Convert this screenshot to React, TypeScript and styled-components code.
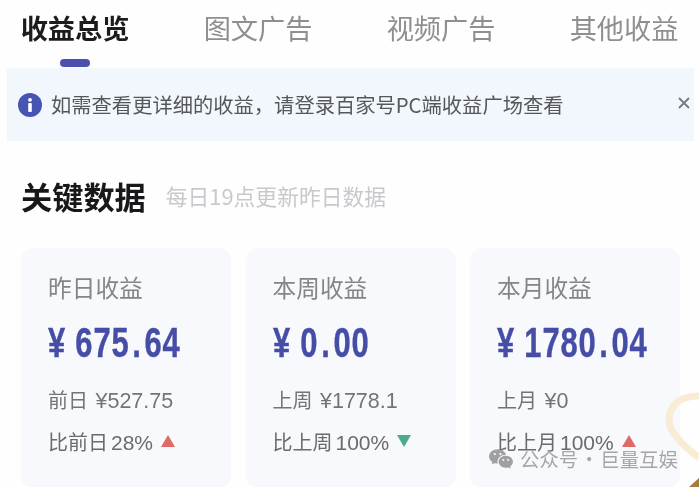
import React from 'react';
import styled, { createGlobalStyle } from 'styled-components';
import { RiWechatFill } from 'react-icons/ri';

const GlobalStyle = createGlobalStyle`
  html, body {
    margin: 0;
    padding: 0;
    background: #fff;
  }
  body {
    font-family: "Noto Sans CJK SC", "Liberation Sans", sans-serif;
  }
`;

const Page = styled.div`
  position: relative;
  width: 699px;
  height: 487px;
  overflow: hidden;
  background: #fefefe;
  filter: blur(0.6px);
`;

const Tabs = styled.div`
  display: flex;
  justify-content: space-between;
  height: 68px;
  padding: 0 21px;
  box-sizing: border-box;
`;

const Tab = styled.div`
  display: flex;
  flex-direction: column;
  align-items: center;
  width: 108px;
`;

const TabLabel = styled.div<{ $active?: boolean }>`
  height: 59px;
  line-height: 55px;
  font-size: 27.2px;
  white-space: nowrap;
  font-weight: ${p => (p.$active ? 600 : 400)};
  color: ${p => (p.$active ? '#1c1c1e' : '#8f8f91')};
`;

const TabMarker = styled.div`
  width: 30px;
  height: 8px;
  border-radius: 4px;
  background: #4a50ac;
`;

const Banner = styled.div`
  display: flex;
  align-items: center;
  height: 73px;
  margin: 0 5px 0 7px;
  padding: 0 4px 0 11px;
  background: #f2f6fd;
`;

const InfoIcon = styled.svg`
  width: 24px;
  height: 24px;
  flex: none;
  margin-right: 9px;
`;

const BannerText = styled.div`
  flex: 1;
  margin-top: -2px;
  font-size: 20.3px;
  white-space: nowrap;
  color: #565759;
`;

const CloseIcon = styled.svg`
  width: 12px;
  height: 12px;
  flex: none;
  margin-top: -4px;
`;

const Heading = styled.div`
  display: flex;
  align-items: center;
  gap: 20px;
  height: 107px;
  padding: 2px 0 0 21px;
  box-sizing: border-box;
`;

const HeadingTitle = styled.h2`
  margin: 0;
  font-size: 31.2px;
  font-weight: 700;
  color: #18181a;
`;

const HeadingNote = styled.span`
  font-size: 21.8px;
  color: #c8c9cc;
`;

const Cards = styled.div`
  display: grid;
  grid-template-columns: repeat(3, minmax(0, 1fr));
  column-gap: 14.5px;
  padding: 0 19px 0 21px;
`;

const Card = styled.div`
  height: 240px;
  padding: 22px 0 0 27px;
  box-sizing: border-box;
  background: #f7f9fc;
  border-radius: 12px;
`;

const CardLabel = styled.div`
  height: 34px;
  line-height: 34px;
  font-size: 23.7px;
  color: #848587;
`;

const Amount = styled.div`
  height: 68px;
  margin-top: 4px;
  line-height: 68px;
  color: #454da6;
  white-space: nowrap;
`;

// no condensed face is installed, so the figures are squeezed from Arial metrics
const AmountText = styled.span`
  display: inline-block;
  font-family: "Liberation Sans", sans-serif;
  font-size: 43px;
  font-weight: 700;
  letter-spacing: 1.1px;
  -webkit-text-stroke: 0.4px #454da6;
  transform: scaleX(0.72);
  transform-origin: left center;
`;

const Yen = styled.span`
  margin-right: 13px;
`;

const Dot = styled.span`
  margin: 0 4px;
`;

const Previous = styled.div`
  height: 30px;
  margin-top: 9px;
  line-height: 30px;
  font-size: 20px;
  color: #737476;
  white-space: nowrap;
`;

const Compare = styled.div`
  display: flex;
  align-items: center;
  gap: 8px;
  height: 30px;
  margin-top: 11px;
  font-size: 20px;
  color: #6a6b6d;
  white-space: nowrap;
`;

const Num = styled.span<{ $size: number }>`
  margin-left: 3px;
  font-family: "Liberation Sans", sans-serif;
  font-size: ${p => p.$size}px;
`;

const Trend = styled.span<{ $up: boolean }>`
  width: 0;
  height: 0;
  border-left: 7px solid transparent;
  border-right: 7px solid transparent;
  border-bottom: ${p => (p.$up ? '12px solid #de6a68' : 'none')};
  border-top: ${p => (p.$up ? 'none' : '12px solid #4daa8c')};
`;

const Watermark = styled.div`
  position: absolute;
  left: 488px;
  top: 445px;
  display: flex;
  align-items: center;
  gap: 6px;
  font-size: 19.4px;
  line-height: 28px;
  word-spacing: -3px;
  color: #a6a6a8;
  white-space: nowrap;

  svg {
    width: 26px;
    height: 26px;
    color: #a0a0a2;
  }
`;

const CornerArt = styled.svg`
  position: absolute;
  right: 0;
  bottom: 0;
  width: 40px;
  height: 100px;
`;

const cards = [
  { label: '昨日收益', whole: '675', cents: '64', prevLabel: '前日', prev: '527.75', cmpLabel: '比前日', cmp: '28%', up: true },
  { label: '本周收益', whole: '0', cents: '00', prevLabel: '上周', prev: '1778.1', cmpLabel: '比上周', cmp: '100%', up: false },
  { label: '本月收益', whole: '1780', cents: '04', prevLabel: '上月', prev: '0', cmpLabel: '比上月', cmp: '100%', up: true }
];

const tabs = ['收益总览', '图文广告', '视频广告', '其他收益'];

const App: React.FC = () => {
  return (
    <Page>
      <GlobalStyle />
      <Tabs>
        {tabs.map((tab, i) => (
          <Tab key={tab}>
            <TabLabel $active={i === 0}>{tab}</TabLabel>
            {i === 0 && <TabMarker />}
          </Tab>
        ))}
      </Tabs>

      <Banner>
        <InfoIcon viewBox="0 0 24 24">
          <circle cx="12" cy="12" r="12" fill="#4654b4" />
          <circle cx="12" cy="6.8" r="1.9" fill="#fff" />
          <rect x="10.2" y="10" width="3.6" height="9" rx="1" fill="#fff" />
        </InfoIcon>
        <BannerText>如需查看更详细的收益，请登录百家号PC端收益广场查看</BannerText>
        <CloseIcon viewBox="0 0 12 12">
          <path d="M1 1l10 10M11 1L1 11" stroke="#77787a" strokeWidth="1.8" fill="none" />
        </CloseIcon>
      </Banner>

      <Heading>
        <HeadingTitle>关键数据</HeadingTitle>
        <HeadingNote>每日19点更新昨日数据</HeadingNote>
      </Heading>

      <Cards>
        {cards.map(card => (
          <Card key={card.label}>
            <CardLabel>{card.label}</CardLabel>
            <Amount>
              <AmountText>
                <Yen>¥</Yen>
                {card.whole}
                <Dot>.</Dot>
                {card.cents}
              </AmountText>
            </Amount>
            <Previous>
              {card.prevLabel} <Num $size={21.5}>¥{card.prev}</Num>
            </Previous>
            <Compare>
              <span>
                {card.cmpLabel}
                <Num $size={21}>{card.cmp}</Num>
              </span>
              <Trend $up={card.up} />
            </Compare>
          </Card>
        ))}
      </Cards>

      <Watermark>
        <RiWechatFill />
        公众号 · 巨量互娱
      </Watermark>

      <CornerArt viewBox="0 0 40 100">
        <path d="M40 9C20 9 10 19 10 33c0 13 15 26 30 38" stroke="#f9ecd4" strokeWidth="7" fill="none" />
        <path d="M30 100l10-9v9z" fill="#a9793f" />
      </CornerArt>
    </Page>
  );
};

export default App;
